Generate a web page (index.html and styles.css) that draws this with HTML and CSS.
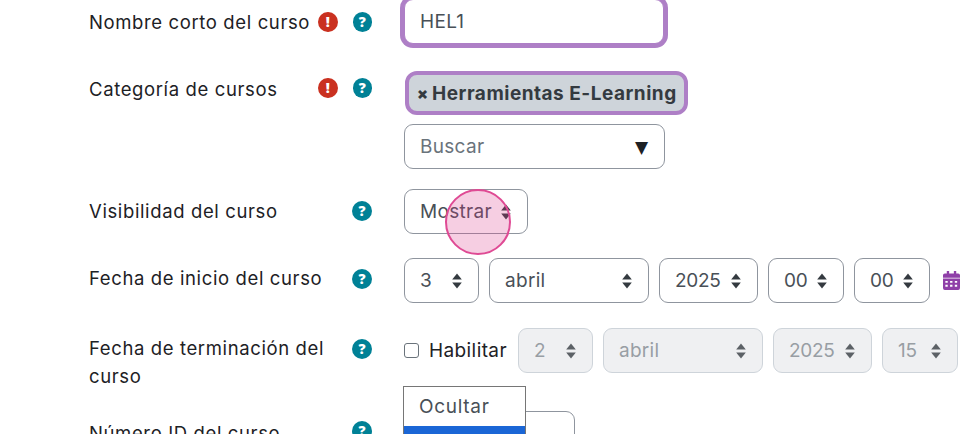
FILE: index.html
```html
<!DOCTYPE html>
<html lang="es">
<head>
<meta charset="utf-8">
<title>Curso</title>
<link rel="stylesheet" href="styles.css">
</head>
<body>
<svg class="defs" width="0" height="0">
  <symbol id="arrows" viewBox="0 0 10 16"><path d="M5 0.5 9.8 6.6H.2z"/><path d="M5 15.5.2 9.4h9.6z"/></symbol>
</svg>
<form class="form">
  <div class="row row-name">
    <div class="label">Nombre corto del curso</div>
    <div class="icons"><span class="ic req">!</span><span class="ic help">?</span></div>
    <div class="field"><div class="control focus w-260">HEL1</div></div>
  </div>
  <div class="row row-cat">
    <div class="label">Categoría de cursos</div>
    <div class="icons"><span class="ic req">!</span><span class="ic help">?</span></div>
    <div class="field stack">
      <div class="chip"><span class="chip-x">×</span><span class="chip-text">Herramientas E-Learning</span></div>
      <div class="control w-261 muted">Buscar<span class="tri">▼</span></div>
    </div>
  </div>
  <div class="row row-vis">
    <div class="label">Visibilidad del curso</div>
    <div class="icons"><span class="ic help">?</span></div>
    <div class="field"><div class="control sel w-124">Mostrar<svg class="arr"><use href="#arrows"/></svg></div></div>
  </div>
  <div class="row row-start">
    <div class="label">Fecha de inicio del curso</div>
    <div class="icons"><span class="ic help">?</span></div>
    <div class="field inline">
      <div class="control sel w-75">3<svg class="arr"><use href="#arrows"/></svg></div>
      <div class="control sel w-160">abril<svg class="arr"><use href="#arrows"/></svg></div>
      <div class="control sel num w-99">2025<svg class="arr"><use href="#arrows"/></svg></div>
      <div class="control sel num w-76">00<svg class="arr"><use href="#arrows"/></svg></div>
      <div class="control sel num w-76">00<svg class="arr"><use href="#arrows"/></svg></div>
      <svg class="cal" viewBox="0 0 18 20"><path d="M4 0h2.500v2.500h5V0H14v2.500h2A2 2 0 0 1 18 4.500V7H0V4.500A2 2 0 0 1 2 2.500h2zM0 8h18v10a2 2 0 0 1-2 2H2a2 2 0 0 1-2-2zm2.500 2.500v2h2.500v-2zm5 0v2H10v-2zm5 0v2H15v-2zm-10 4v2h2.500v-2zm5 0v2H10v-2zm5 0v2H15v-2z" fill-rule="evenodd"/></svg>
    </div>
  </div>
  <div class="row row-end">
    <div class="label">Fecha de terminación del curso</div>
    <div class="icons"><span class="ic help">?</span></div>
    <div class="field inline">
      <label class="check"><span class="box"></span>Habilitar</label>
      <div class="control sel dis w-75">2<svg class="arr"><use href="#arrows"/></svg></div>
      <div class="control sel dis w-160">abril<svg class="arr"><use href="#arrows"/></svg></div>
      <div class="control sel dis num w-99">2025<svg class="arr"><use href="#arrows"/></svg></div>
      <div class="control sel dis num w-76">15<svg class="arr"><use href="#arrows"/></svg></div>
    </div>
  </div>
  <div class="row row-id">
    <div class="label">Número ID del curso</div>
    <div class="icons"><span class="ic help">?</span></div>
    <div class="field"><div class="control w-171"></div></div>
  </div>
</form>
<div class="popup"><div class="opt">Ocultar</div><div class="opt active">Mostrar</div></div>
<div class="pointer"></div>
</body>
</html>
```
FILE: styles.css
```css
* { box-sizing: border-box; }
html, body { margin: 0; height: 434px; overflow: hidden; background: #fff; }
body { position: relative; font-family: Inter, "Noto Sans", sans-serif; font-size: 18.5px; letter-spacing: .62px; color: #1d2125; }
.defs { position: absolute; }
.form { padding: 0 0 0 89px; margin-top: -1px; }
.row { display: flex; align-items: flex-start; }
.row-name { height: 73px; }
.row-cat { height: 117px; }
.row-vis { height: 69px; }
.row-start { height: 70px; }
.row-end { height: 83px; }
.label { width: 250px; margin-right: -21px; line-height: 28px; padding-top: 9px; flex: none; }
.row-cat .label { padding-top: 3px; }
.row-vis .label { padding-top: 8px; }
.row-start .label { padding-top: 6px; }
.row-id .label { padding-top: 8px; }
.row-end .label { padding-top: 6px; }
.icons { width: 86px; flex: none; display: flex; justify-content: flex-end; gap: 15px; padding: 13px 32px 0 0; letter-spacing: 0; }
.row-cat .icons { padding-top: 6px; }
.row-vis .icons { padding-top: 12px; }
.row-start .icons { padding-top: 11px; }
.row-end .icons { padding-top: 11px; }
.row-id .icons { padding-top: 10px; }
.ic { width: 20px; height: 20px; border-radius: 50%; color: #fff; font: 800 14px/20px "Open Sans", sans-serif; text-align: center; display: block; }
.req { background: #ca3120; }
.help { background: #008196; }
.field { flex: none; }
.stack { display: flex; flex-direction: column; gap: 8px; }
.inline { display: flex; align-items: center; gap: 10px; }
.control { height: 45px; border: 1px solid #8f959e; border-radius: 9px; background: #fff; color: #495057; display: flex; align-items: center; justify-content: space-between; padding: 0 15px; font-size: 19px; letter-spacing: .3px; flex: none; }
.num { letter-spacing: -.3px; }
.focus { border-color: #ae7fc6; box-shadow: 0 0 0 4px #ae7fc6; }
.muted { color: #6a737b; }
.tri { color: #1d2125; font-size: 17px; margin-right: 1px; font-family: "DejaVu Sans", sans-serif; letter-spacing: 0; }
.sel { padding-right: 16px; }
.w-260 { width: 260px; }
.w-261 { width: 261px; }
.w-124 { width: 124px; }
.w-75 { width: 75px; }
.w-76 { width: 76px; }
.w-99 { width: 99px; }
.w-160 { width: 160px; }
.w-171 { width: 171px; }
.arr { width: 10px; height: 16px; fill: #343a40; flex: none; }
.dis { border-color: #ced4da; color: #989ea4; background: #eff0f2; }
.dis .arr { fill: #5c6166; }
.chip { display: flex; align-items: center; gap: 4px; align-self: flex-start; margin-left: 1px; height: 44px; margin-top: -1px; width: 283px; border: 4px solid #ae7fc6; border-radius: 12px; background: #ced4da; color: #343a40; font-weight: 700; font-size: 19px; letter-spacing: .5px; padding-left: 8px; white-space: nowrap; overflow: hidden; margin-bottom: 1px; }
.chip-x { font-weight: 900; font-size: 16px; letter-spacing: 0; width: 11px; }
.check { display: flex; align-items: center; gap: 10px; font-size: 19px; letter-spacing: .4px; color: #1d2125; margin-right: 1px; }
.box { width: 15px; height: 15px; border: 1px solid #6a737b; border-radius: 3px; background: #fff; }
.cal { width: 17px; height: 19px; fill: #8f3fa8; margin-left: 3px; flex: none; }
.popup { position: absolute; left: 403px; top: 386px; width: 123px; border: 1px solid #767676; background: #fff; color: #495057; font-size: 19px; letter-spacing: .7px; }
.opt { height: 39px; padding: 6px 15px 0; line-height: 28px; }
.active { background: #1a66d6; color: #fff; }
.pointer { position: absolute; left: 445px; top: 189px; width: 66px; height: 66px; border-radius: 50%; background: rgba(220, 60, 140, .25); border: 2px solid #df4a94; }
```
